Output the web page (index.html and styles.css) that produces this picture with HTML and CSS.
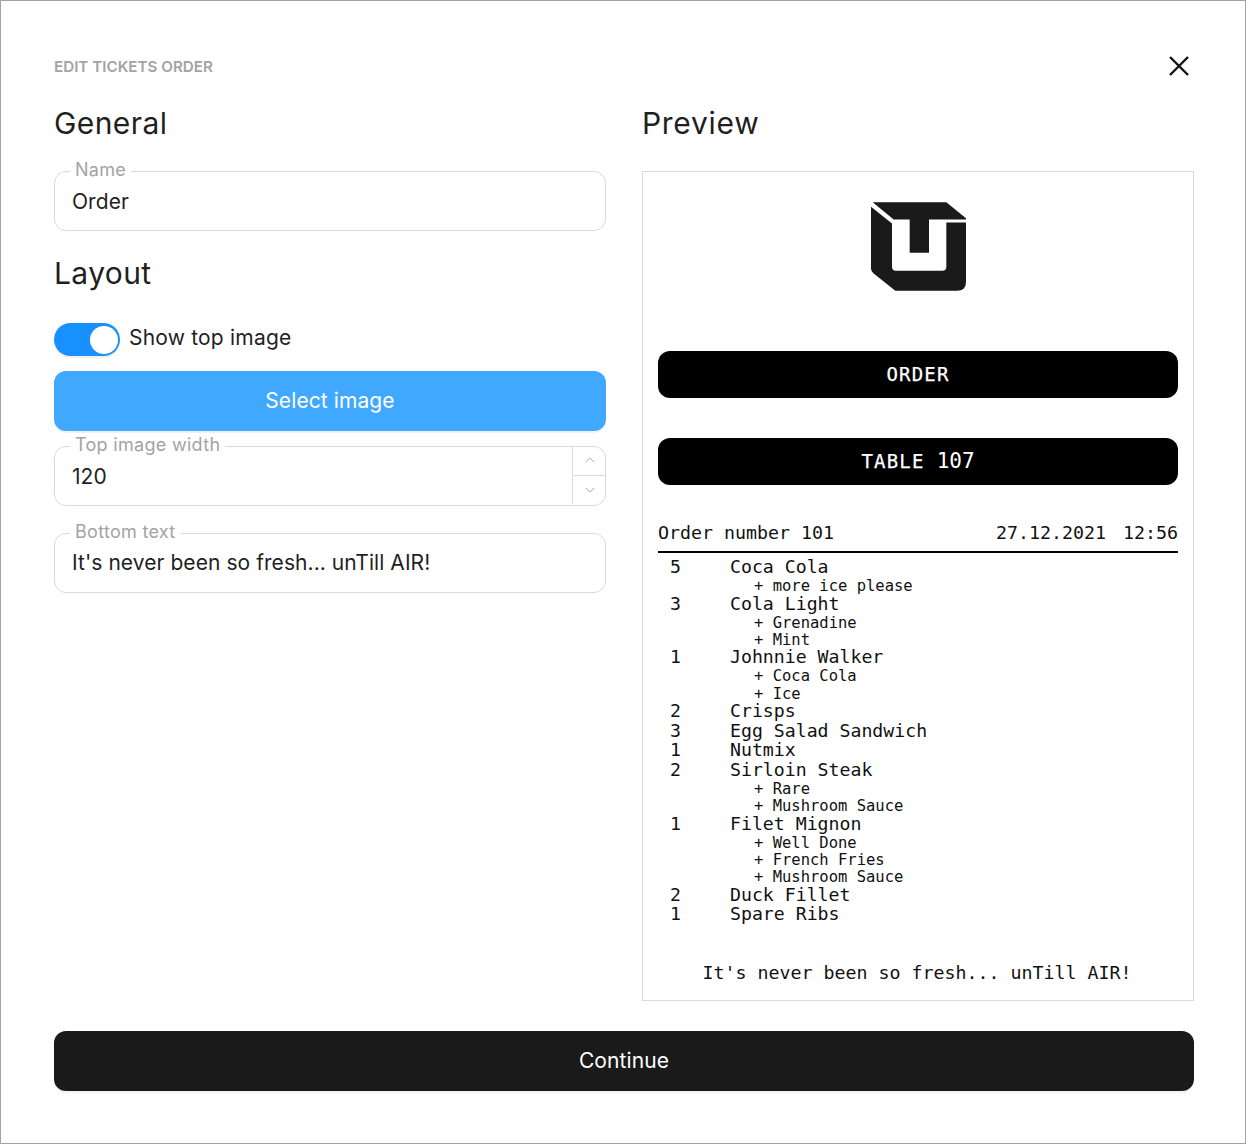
FILE: index.html
```html
<!DOCTYPE html>
<html lang="en">
<head>
<meta charset="utf-8">
<title>Edit tickets order</title>
<link rel="stylesheet" href="styles.css">
</head>
<body>
<div class="modal">
  <div class="top">
    <span class="title">EDIT TICKETS ORDER</span>
    <svg class="close" viewBox="0 0 20 20" width="20" height="20"><path d="M1 1L19 19M19 1L1 19" fill="none" stroke="#111" stroke-width="2.4"/></svg>
  </div>
  <div class="cols">
    <div class="col">
      <h2 class="head">General</h2>
      <fieldset class="field"><legend>Name</legend><div class="value">Order</div></fieldset>
      <h2 class="head layout">Layout</h2>
      <div class="switch-row">
        <span class="switch"><span class="knob"></span></span>
        <span class="switch-label">Show top image</span>
      </div>
      <div class="btn-blue">Select image</div>
      <fieldset class="field number"><legend>Top image width</legend>
        <div class="value near">120</div>
        <div class="stepper">
          <span class="step"><svg viewBox="0 0 12 7" width="10" height="6"><path d="M1 6L6 1L11 6" fill="none" stroke="#999" stroke-width="1"/></svg></span>
          <span class="step"><svg viewBox="0 0 12 7" width="10" height="6"><path d="M1 1L6 6L11 1" fill="none" stroke="#999" stroke-width="1"/></svg></span>
        </div>
      </fieldset>
      <fieldset class="field bottom"><legend>Bottom text</legend><div class="value">It's never been so fresh... unTill AIR!</div></fieldset>
    </div>
    <div class="col">
      <h2 class="head right">Preview</h2>
      <div class="ticket">
        <svg class="logo" viewBox="92 66 285 266" width="95" height="89">
          <path fill="#1a1a1a" d="M97 66H318L377 114V118H266V218H208V118H160Z"/>
          <path fill="#1a1a1a" d="M92 80L155 130V260Q155 272 167 272H306Q318 272 318 260V127H377V305Q377 332 350 332H165L100 280Q92 274 92 266Z"/>
        </svg>
        <div class="bar first"><span class="caps">ORDER</span></div>
        <div class="bar second"><span class="caps">TABLE</span><span class="num">107</span></div>
        <div class="meta"><span>Order number 101</span><span class="when"><span>27.12.2021</span><span>12:56</span></span></div>
        <div class="lines">
          <div class="item"><span>5</span><span>Coca Cola</span></div>
          <div class="mod">+ more ice please</div>
          <div class="item"><span>3</span><span>Cola Light</span></div>
          <div class="mod">+ Grenadine</div>
          <div class="mod">+ Mint</div>
          <div class="item"><span>1</span><span>Johnnie Walker</span></div>
          <div class="mod">+ Coca Cola</div>
          <div class="mod">+ Ice</div>
          <div class="item"><span>2</span><span>Crisps</span></div>
          <div class="item"><span>3</span><span>Egg Salad Sandwich</span></div>
          <div class="item"><span>1</span><span>Nutmix</span></div>
          <div class="item"><span>2</span><span>Sirloin Steak</span></div>
          <div class="mod">+ Rare</div>
          <div class="mod">+ Mushroom Sauce</div>
          <div class="item"><span>1</span><span>Filet Mignon</span></div>
          <div class="mod">+ Well Done</div>
          <div class="mod">+ French Fries</div>
          <div class="mod">+ Mushroom Sauce</div>
          <div class="item"><span>2</span><span>Duck Fillet</span></div>
          <div class="item"><span>1</span><span>Spare Ribs</span></div>
        </div>
        <div class="foot">It's never been so fresh... unTill AIR!</div>
      </div>
    </div>
  </div>
  <div class="btn-dark">Continue</div>
</div>
</body>
</html>
```
FILE: styles.css
```css
* { box-sizing: border-box; }
html, body { margin: 0; padding: 0; background: #fff; }
body { font-family: Inter, "Liberation Sans", sans-serif; color: #1f1f1f; }
.modal { width: 1246px; height: 1144px; border: 1px solid #a3a3a3; padding: 0 51px 0 53px; display: flex; flex-direction: column; }
.top { height: 101px; padding-top: 49px; display: flex; justify-content: space-between; align-items: flex-start; }
.title { font-size: 15.2px; font-weight: 600; color: #a3a3a3; line-height: 34px; }
.close { margin: 5.5px 5px 0 0; }
.cols { display: grid; grid-template-columns: 552px 552px; column-gap: 36px; height: 929px; }
.col { display: flex; flex-direction: column; }
.head { margin: 0; font-size: 30px; font-weight: 400; line-height: 42px; letter-spacing: .4px; color: #1f1f1f; height: 58px; }
.head.right { height: 69px; letter-spacing: .7px; }
.head.layout { height: 72px; margin-top: 20px; line-height: 44px; }
.field { margin: 0; padding: 0 17px; border: 1px solid #d9d9d9; border-radius: 12px; height: 71px; position: relative; min-width: 0; }
.field legend { font-size: 18px; letter-spacing: .3px; color: #a3a3a3; padding: 0 5px; margin-left: -2px; line-height: 20px; height: 22px; position: relative; margin-bottom: -11px; background: #fff; }
.value { font-size: 21px; letter-spacing: .06px; line-height: 30px; height: 30px; margin-top: 16px; white-space: nowrap; }
.bottom .value { margin-top: 15px; }
.switch-row { display: flex; align-items: center; gap: 9px; height: 33px; margin-bottom: 15px; }
.switch { width: 66px; height: 33px; border-radius: 17px; background: #1890ff; display: flex; justify-content: flex-end; align-items: center; padding-right: 2px; box-shadow: 0 2px 2px rgba(0,0,0,.08); }
.knob { width: 28px; height: 28px; border-radius: 50%; background: #fff; }
.switch-label { font-size: 21px; letter-spacing: .2px; line-height: 30px; margin-bottom: 4px; }
.btn-blue { height: 60px; padding-bottom: 2px; background: #40a9ff; color: #fff; border-radius: 12px; font-size: 21px; letter-spacing: .1px; display: flex; align-items: center; justify-content: center; box-shadow: 0 2px 0 rgba(0,0,0,.05); flex: none; }
.number { margin-top: 4px; }
.bottom { margin-top: 16px; }
.stepper { position: absolute; right: 0; top: 0; height: 58px; width: 33px; padding-left: 1px; border-left: 1px solid #d9d9d9; display: flex; flex-direction: column; }
.step { flex: 1; display: flex; align-items: center; justify-content: center; }
.step + .step { border-top: 1px solid #d9d9d9; }
.ticket { height: 830px; border: 1px solid #d9d9d9; padding: 30px 15px 0; font-family: "DejaVu Sans Mono", "Liberation Mono", monospace; color: #111; display: flex; flex-direction: column; }
.logo { align-self: center; flex: none; margin-bottom: 60px; display: block; }
.bar { height: 47px; padding-bottom: 1px; background: #000; color: #fff; border-radius: 12px; display: flex; align-items: center; justify-content: center; flex: none; }
.caps { font-size: 19px; letter-spacing: 1.2px; -webkit-text-stroke: .25px #fff; }
.num { font-size: 21px; margin-left: 12px; line-height: 1; }
.second { margin-top: 40px; }
.meta { display: flex; justify-content: space-between; font-size: 18.3px; line-height: 22px; margin-top: 37px; padding-bottom: 7px; border-bottom: 2px solid #000; white-space: pre; }
.when { display: flex; gap: 17px; }
.lines { margin-top: 4px; }
.item { display: flex; font-size: 18.2px; line-height: 19.6px; white-space: pre; }
.item span:first-child { width: 72px; padding-left: 12px; flex: none; }
.mod { font-size: 15.5px; line-height: 17.1px; padding: 1.4px 0 0 96px; margin-bottom: -1.4px; white-space: pre; }
.foot { font-size: 18.3px; line-height: 22px; text-align: center; margin-top: 38px; padding-right: 2px; white-space: pre; }
.btn-dark { height: 60px; padding-bottom: 2px; background: #1a1a1a; color: #fff; border-radius: 12px; font-size: 21px; letter-spacing: .1px; display: flex; align-items: center; justify-content: center; box-shadow: 0 2px 0 rgba(0,0,0,.05); flex: none; }
```
